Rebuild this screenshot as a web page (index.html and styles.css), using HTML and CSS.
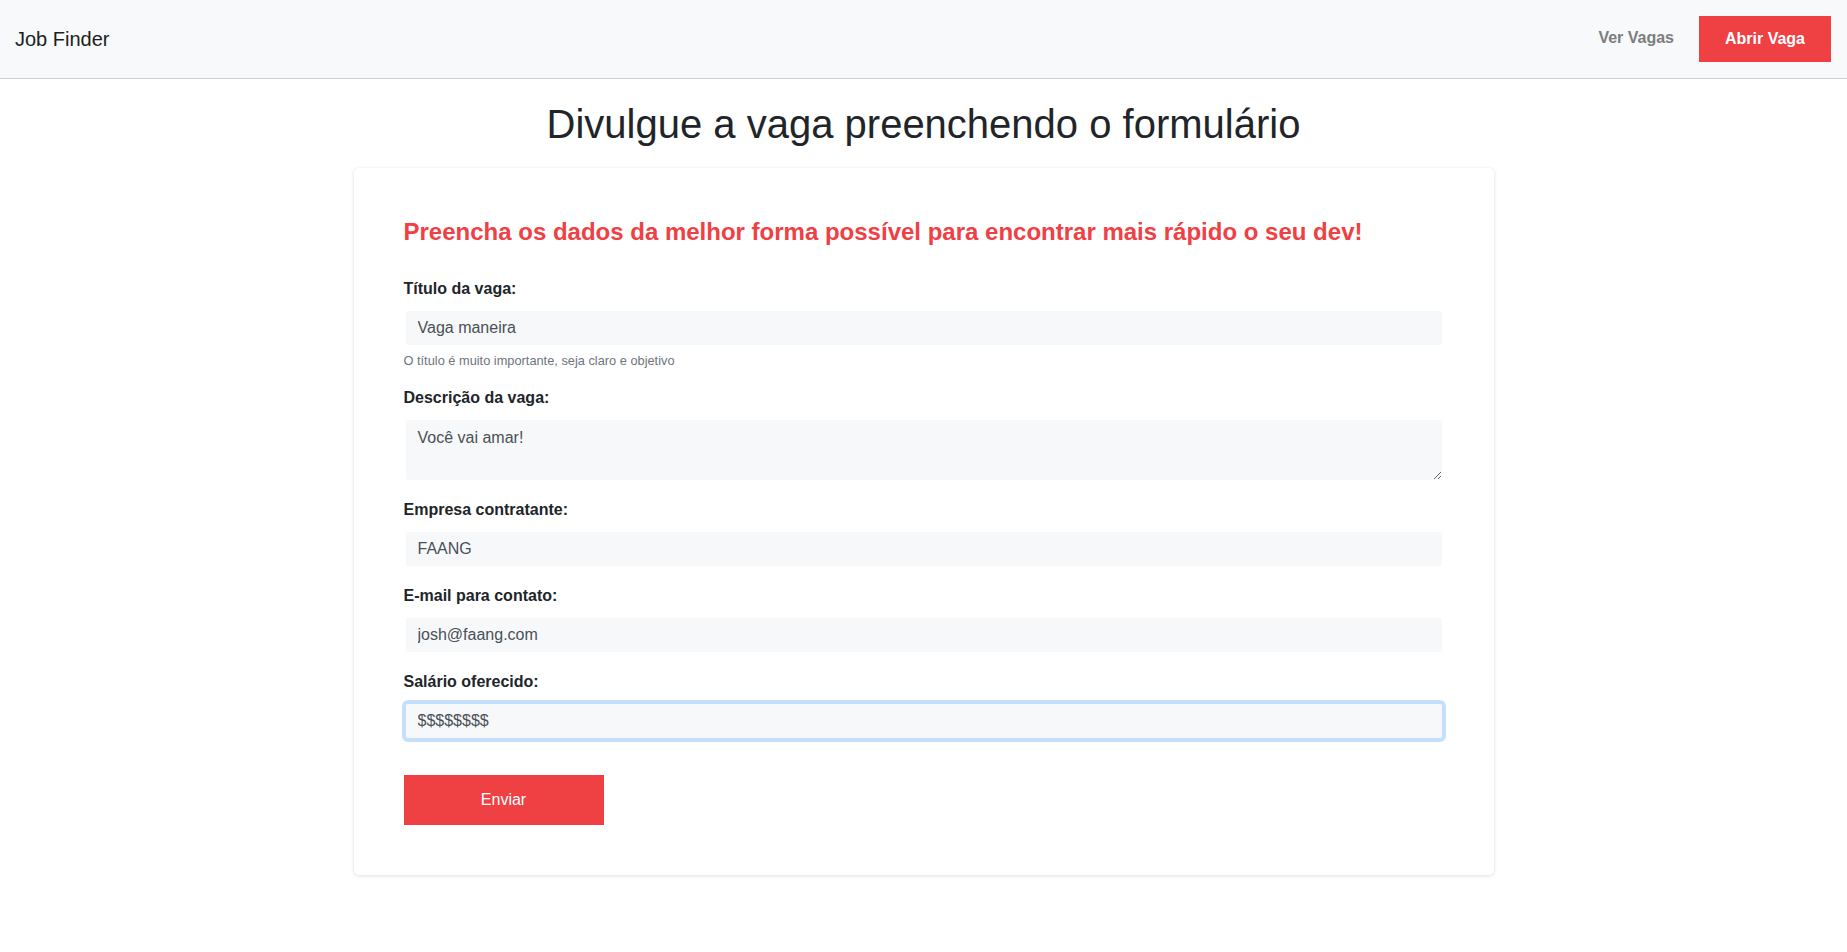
FILE: index.html
```html
<!DOCTYPE html>
<html lang="pt-BR">
<head>
<meta charset="utf-8">
<title>Job Finder</title>
<link rel="stylesheet" href="styles.css">
</head>
<body>
<header class="navbar">
  <a class="brand" href="#">Job Finder</a>
  <nav class="nav">
    <a class="nav-link" href="#">Ver Vagas</a>
    <a class="nav-btn" href="#">Abrir Vaga</a>
  </nav>
</header>
<main class="main">
  <h1 class="page-title">Divulgue a vaga preenchendo o formulário</h1>
  <section class="card">
    <h4 class="card-title">Preencha os dados da melhor forma possível para encontrar mais rápido o seu dev!</h4>
    <form class="form">
      <div class="form-group">
        <label class="label" for="title">Título da vaga:</label>
        <input class="input" id="title" type="text" value="Vaga maneira">
        <small class="help">O título é muito importante, seja claro e objetivo</small>
      </div>
      <div class="form-group">
        <label class="label" for="desc">Descrição da vaga:</label>
        <textarea class="input textarea" id="desc" rows="2">Você vai amar!</textarea>
      </div>
      <div class="form-group">
        <label class="label" for="company">Empresa contratante:</label>
        <input class="input" id="company" type="text" value="FAANG">
      </div>
      <div class="form-group">
        <label class="label" for="email">E-mail para contato:</label>
        <input class="input" id="email" type="email" value="josh@faang.com">
      </div>
      <div class="form-group">
        <label class="label" for="salary">Salário oferecido:</label>
        <input class="input input-focused" id="salary" type="text" value="$$$$$$$$">
      </div>
      <button class="submit" type="button">Enviar</button>
    </form>
  </section>
</main>
</body>
</html>
```
FILE: styles.css
```css
* { box-sizing: border-box; }
html, body {
  margin: 0;
  padding: 0;
  background: #fff;
  font-family: "Liberation Sans", Arial, sans-serif;
  color: #212529;
}
a { text-decoration: none; }

.navbar {
  display: flex;
  align-items: center;
  justify-content: space-between;
  height: 79px;
  padding: 16px 16px 16px 15px;
  background: #f8f9fa;
  border-bottom: 1px solid #cfd0d1;
}
.brand {
  font-size: 20px;
  line-height: 30px;
  color: #1c1e21;
}
.nav {
  display: flex;
  align-items: center;
}
.nav-link {
  font-size: 16px;
  font-weight: bold;
  color: #7c7d7e;
  margin-right: 25px;
  padding-bottom: 2px;
}
.nav-btn {
  display: flex;
  align-items: center;
  justify-content: center;
  width: 132px;
  height: 46px;
  background: #ef4044;
  color: #fff;
  font-size: 16px;
  font-weight: bold;
}

.main {
  padding-bottom: 40px;
}
.page-title {
  margin: 21px 0 20px;
  text-align: center;
  font-size: 40px;
  line-height: 1.2;
  font-weight: 400;
  color: #212529;
}
.card {
  width: 1140px;
  margin: 0 auto;
  padding: 50px;
  background: #fff;
  border-radius: 5px;
  box-shadow: 0 1px 4px rgba(0, 0, 0, 0.12), 0 0 1px rgba(0, 0, 0, 0.06);
}
.card-title {
  margin: 0 0 30px;
  font-size: 24px;
  line-height: 1.2;
  font-weight: bold;
  color: #ef4044;
}
.form-group {
  margin-bottom: 16px;
}
.label {
  display: block;
  margin-bottom: 8px;
  font-size: 16px;
  line-height: 24px;
  font-weight: bold;
  color: #212529;
}
.input {
  display: block;
  width: 100%;
  height: 38px;
  padding: 6px 12px;
  border: 2px solid #fff;
  border-radius: 4px;
  background: #f7f8f9;
  font-family: "Liberation Sans", Arial, sans-serif;
  font-size: 16px;
  line-height: 24px;
  color: #495057;
  outline: none;
}
.textarea {
  height: 64px;
  resize: vertical;
}
.input-focused {
  border-color: #c3dffc;
  box-shadow: 0 0 0 2px #c6e0fc;
}
.help {
  display: block;
  margin-top: 4px;
  font-size: 12.8px;
  line-height: 1.5;
  color: #6c757d;
}
.submit {
  display: block;
  width: 200px;
  height: 50px;
  margin-top: 35px;
  border: none;
  background: #ef4044;
  color: #fff;
  font-family: "Liberation Sans", Arial, sans-serif;
  font-size: 16px;
  cursor: pointer;
}
```
